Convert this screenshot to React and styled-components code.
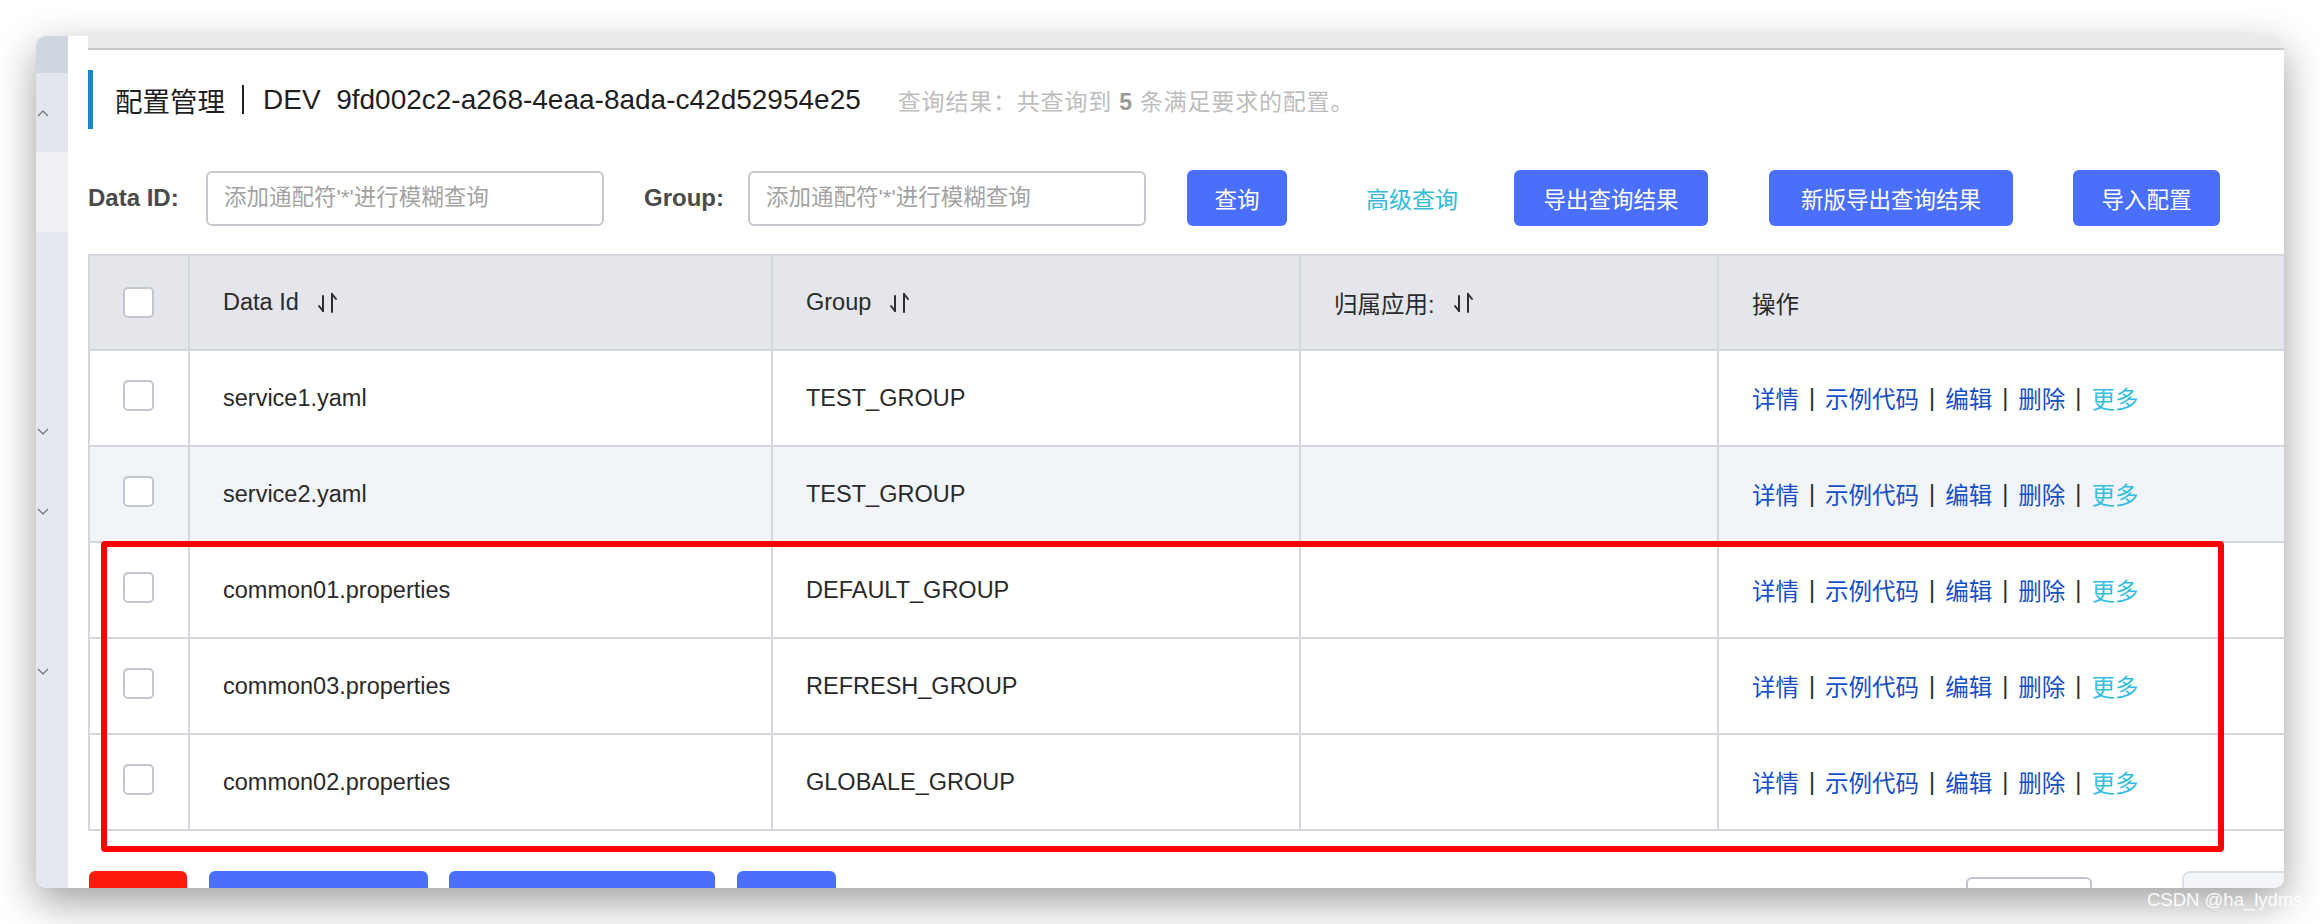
import React from "react";
import styled, { createGlobalStyle } from "styled-components";

const GlobalStyle = createGlobalStyle`
  html, body {
    margin: 0;
    padding: 0;
    background: #fff;
  }
  body {
    font-family: "Liberation Sans", "Noto Sans CJK SC", sans-serif;
    color: #333;
  }
  * {
    box-sizing: border-box;
  }
`;

const Page = styled.div`
  position: relative;
  width: 2320px;
  height: 924px;
  padding: 36px 0 0 36px;
  overflow: hidden;
  background: #fff;
`;

const Window = styled.div`
  position: relative;
  display: flex;
  width: 2248px;
  height: 852px;
  border-radius: 10px;
  background: #fff;
  overflow: hidden;
  box-shadow: 0 14px 40px rgba(0, 0, 0, 0.38);
`;

const Sidebar = styled.div`
  width: 32px;
  flex-shrink: 0;
  display: flex;
  flex-direction: column;
  background: #e5e8ee;
`;

const SideBlock = styled.div`
  height: ${(p) => p.$h}px;
  background: ${(p) => p.$bg || "transparent"};
  display: flex;
  align-items: center;
  padding-left: 1px;
`;

const Main = styled.div`
  flex: 1;
  min-width: 0;
  display: flex;
  flex-direction: column;
  padding-left: 20px;
  overflow: hidden;
`;

const TopStrip = styled.div`
  height: 14px;
  flex-shrink: 0;
  background: #ebebeb;
  border-bottom: 2px solid #c9c9c9;
`;

const TitleRow = styled.div`
  margin-top: 20px;
  height: 59px;
  flex-shrink: 0;
  display: flex;
  align-items: center;
  border-left: 5px solid #1a85c6;
  padding-left: 22px;
  white-space: pre;
`;

const Title = styled.span`
  font-size: 27.5px;
  color: #1f1f1f;
`;

const Code = styled.span`
  font-size: 28px;
  color: #1f1f1f;
`;

const TitleSep = styled.span`
  display: inline-block;
  width: 2px;
  height: 29px;
  margin: 0 19px 0 17px;
  background: #222;
`;

const Result = styled.span`
  margin-left: 37px;
  font-size: 23px;
  letter-spacing: 0.8px;
  color: #bdbdbd;
  white-space: pre;

  b {
    color: #9a9a9a;
  }
`;

const SearchRow = styled.div`
  margin-top: 41px;
  height: 56px;
  flex-shrink: 0;
  display: flex;
  align-items: center;
`;

const Label = styled.span`
  width: ${(p) => p.$w}px;
  margin-left: ${(p) => p.$ml || 0}px;
  flex-shrink: 0;
  font-size: 24px;
  font-weight: bold;
  color: #4a4a4a;
`;

const Input = styled.input`
  width: 398px;
  height: 55px;
  flex-shrink: 0;
  border: 2px solid #c6c9cf;
  border-radius: 6px;
  padding: 0 16px;
  font-family: inherit;
  font-size: 22.5px;
  color: #333;
  outline: none;

  &::placeholder {
    color: #a3a3a3;
  }
`;

const Button = styled.button`
  width: ${(p) => p.$w}px;
  height: 56px;
  margin-left: ${(p) => p.$ml || 0}px;
  flex-shrink: 0;
  border: none;
  border-radius: 6px;
  background: ${(p) => (p.$danger ? "#fc1a0c" : "#4a6ffd")};
  color: #fff;
  font-family: inherit;
  font-size: 22.5px;
  padding: 0;
`;

const TextButton = styled.span`
  width: ${(p) => p.$w}px;
  margin-left: ${(p) => p.$ml || 0}px;
  flex-shrink: 0;
  font-size: 23px;
  color: #33bbd7;
`;

const Table = styled.div`
  margin-top: 28px;
  flex-shrink: 0;
  width: 2329px;
  border-top: 2px solid #d4d7de;
  border-left: 2px solid #d4d7de;
`;

const Row = styled.div`
  display: grid;
  grid-template-columns: 100px 583px 528px 418px 700px;
  height: ${(p) => (p.$head ? 95 : 96)}px;
  background: ${(p) => (p.$head ? "#e4e6eb" : p.$alt ? "#f1f4f8" : "#fff")};
  border-bottom: 2px solid #d4d7de;
`;

const Cell = styled.div`
  display: flex;
  align-items: center;
  justify-content: ${(p) => (p.$center ? "center" : "flex-start")};
  padding-left: ${(p) => (p.$center ? 0 : 33)}px;
  padding-right: ${(p) => (p.$center ? 2 : 0)}px;
  border-right: 2px solid #d4d7de;
  font-size: 23.5px;
  color: #2a2a2a;
  white-space: nowrap;
`;

const Checkbox = styled.span`
  width: 31px;
  height: 31px;
  border: 2px solid #c3c6ce;
  border-radius: 5px;
  background: #fff;
  margin-top: ${(p) => (p.$head ? 0 : -6)}px;
`;

const SortWrap = styled.span`
  display: inline-flex;
  margin-left: 18px;
`;

const Link = styled.span`
  font-size: 23.5px;
  color: ${(p) => (p.$more ? "#35bfdc" : "#1550c6")};
`;

const Sep = styled.span`
  font-size: 23.5px;
  color: #2a2a2a;
  margin: 0 10px;
`;

const BottomBar = styled.div`
  margin-top: 40px;
  display: flex;
  align-items: flex-start;
  flex-shrink: 0;
  padding-left: 1px;
`;

const PagerInput = styled.div`
  width: 126px;
  height: 50px;
  margin-left: ${(p) => p.$ml}px;
  margin-top: 6px;
  flex-shrink: 0;
  border: 2px solid #c0c4cc;
  border-radius: 6px;
  background: #fff;
`;

const PagerBox = styled.div`
  width: 120px;
  height: 50px;
  margin-left: 90px;
  flex-shrink: 0;
  border: 2px solid #dcdfe6;
  border-radius: 8px;
  background: #f4f5f8;
`;

const Highlight = styled.div`
  position: absolute;
  left: 65px;
  top: 505px;
  width: 2123px;
  height: 311px;
  border: 6px solid #ff0000;
  border-radius: 4px;
  pointer-events: none;
`;

const Watermark = styled.div`
  position: absolute;
  left: 2147px;
  top: 889px;
  font-size: 18.5px;
  color: rgba(255, 255, 255, 0.95);
  white-space: nowrap;
`;

const Chevron = ({ up }) => (
  <svg width="12" height="8" viewBox="0 0 12 8">
    <polyline
      points={up ? "1,7 6,2 11,7" : "1,1 6,6 11,1"}
      fill="none"
      stroke="#6f6f6f"
      strokeWidth="1.2"
    />
  </svg>
);

const SortIcon = () => (
  <SortWrap>
    <svg width="20" height="20" viewBox="0 0 20 20">
      <g fill="none" stroke="#2e2e2e" strokeWidth="2" strokeLinecap="round">
        <line x1="6" y1="3" x2="6" y2="18" />
        <line x1="6" y1="18" x2="2" y2="13" />
        <line x1="15" y1="1" x2="15" y2="19" />
        <line x1="15" y1="1" x2="19" y2="6" />
      </g>
    </svg>
  </SortWrap>
);

const rows = [
  { id: "service1.yaml", group: "TEST_GROUP" },
  { id: "service2.yaml", group: "TEST_GROUP" },
  { id: "common01.properties", group: "DEFAULT_GROUP" },
  { id: "common03.properties", group: "REFRESH_GROUP" },
  { id: "common02.properties", group: "GLOBALE_GROUP" },
];

const actions = ["详情", "示例代码", "编辑", "删除"];

export default function App() {
  return (
    <Page>
      <GlobalStyle />
      <Window>
        <Sidebar>
          <SideBlock $h={37} $bg="#cfd6df" />
          <SideBlock $h={79} $bg="#e3e7ed">
            <Chevron up />
          </SideBlock>
          <SideBlock $h={80} $bg="#eff1f5" />
          <SideBlock $h={80} />
          <SideBlock $h={80} />
          <SideBlock $h={80}>
            <Chevron />
          </SideBlock>
          <SideBlock $h={80}>
            <Chevron />
          </SideBlock>
          <SideBlock $h={80} />
          <SideBlock $h={80}>
            <Chevron />
          </SideBlock>
        </Sidebar>

        <Main>
          <TopStrip />
          <TitleRow>
            <Title>配置管理</Title>
            <TitleSep />
            <Code>{"DEV\u00a0\u00a09fd002c2-a268-4eaa-8ada-c42d52954e25"}</Code>
            <Result>
              查询结果：共查询到 <b>5</b> 条满足要求的配置。
            </Result>
          </TitleRow>

          <SearchRow>
            <Label $w={118}>Data ID:</Label>
            <Input placeholder="添加通配符'*'进行模糊查询" />
            <Label $w={104} $ml={40}>
              Group:
            </Label>
            <Input placeholder="添加通配符'*'进行模糊查询" />
            <Button $w={100} $ml={41}>
              查询
            </Button>
            <TextButton $w={97} $ml={79}>
              高级查询
            </TextButton>
            <Button $w={194} $ml={51}>
              导出查询结果
            </Button>
            <Button $w={244} $ml={61}>
              新版导出查询结果
            </Button>
            <Button $w={147} $ml={60}>
              导入配置
            </Button>
          </SearchRow>

          <Table>
            <Row $head>
              <Cell $center>
                <Checkbox $head />
              </Cell>
              <Cell>
                Data Id
                <SortIcon />
              </Cell>
              <Cell>
                Group
                <SortIcon />
              </Cell>
              <Cell>
                归属应用:
                <SortIcon />
              </Cell>
              <Cell>操作</Cell>
            </Row>
            {rows.map((r, i) => (
              <Row key={r.id} $alt={i === 1}>
                <Cell $center>
                  <Checkbox />
                </Cell>
                <Cell>{r.id}</Cell>
                <Cell>{r.group}</Cell>
                <Cell />
                <Cell>
                  {actions.map((a) => (
                    <React.Fragment key={a}>
                      <Link>{a}</Link>
                      <Sep>|</Sep>
                    </React.Fragment>
                  ))}
                  <Link $more>更多</Link>
                </Cell>
              </Row>
            ))}
          </Table>

          <BottomBar>
            <Button $w={98} $danger>
              删除
            </Button>
            <Button $w={219} $ml={22}>
              导出选中的配置
            </Button>
            <Button $w={266} $ml={21}>
              新版导出选中的配置
            </Button>
            <Button $w={99} $ml={22}>
              克隆
            </Button>
            <PagerInput $ml={1130} />
            <PagerBox />
          </BottomBar>
        </Main>
        <Highlight />
      </Window>
      <Watermark>CSDN @ha_lydms</Watermark>
    </Page>
  );
}
